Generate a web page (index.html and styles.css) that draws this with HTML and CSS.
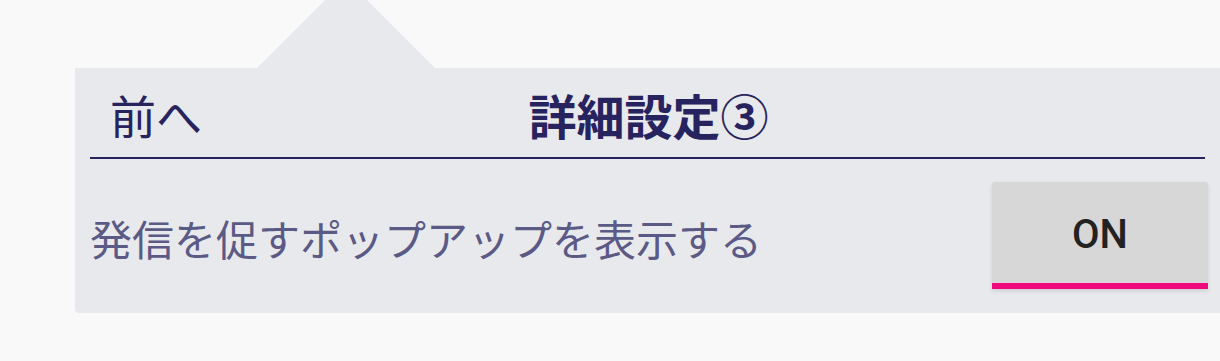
FILE: index.html
```html
<!DOCTYPE html>
<html lang="ja">
<head>
<meta charset="utf-8">
<link rel="stylesheet" href="styles.css">
</head>
<body>
<div class="panel">
  <div class="header">
    <span class="back">前へ</span>
    <span class="title">詳細設定③</span>
  </div>
  <div class="row">
    <span class="label">発信を促すポップアップを表示する</span>
    <button class="toggle">ON</button>
  </div>
</div>
</body>
</html>
```
FILE: styles.css
```css
html, body {
  margin: 0;
  padding: 0;
  background: #f9f9fa;
  font-family: "Noto Sans CJK JP", "Noto Sans", sans-serif;
}
body {
  padding-top: 68px;
  height: 361px;
  box-sizing: border-box;
  overflow: hidden;
}
.panel {
  position: relative;
  margin-left: 75px;
  background: #e8e9ec;
  border-radius: 0 0 0 4px;
  padding: 0 15px;
  height: 245px;
  box-sizing: border-box;
}
.panel::before {
  content: "";
  position: absolute;
  left: 182px;
  top: -89px;
  width: 0;
  height: 0;
  border-left: 89px solid transparent;
  border-right: 89px solid transparent;
  border-bottom: 89px solid #e8e9ec;
}
.header {
  position: relative;
  height: 89px;
  border-bottom: 2px solid #27235f;
  display: flex;
  align-items: center;
  justify-content: center;
  color: #27235f;
}
.back {
  position: absolute;
  left: 20px;
  top: 50%;
  transform: translateY(-50%);
  font-size: 46px;
  line-height: 1;
  margin-top: 1px;
}
.title {
  font-size: 48px;
  font-weight: 700;
  line-height: 1;
  margin-top: 2px;
  margin-left: 2px;
}
.row {
  display: flex;
  align-items: center;
  justify-content: space-between;
  padding-top: 23px;
  margin-right: -3px;
}
.label {
  font-size: 42px;
  color: #5b5985;
  line-height: 1;
  margin-left: 0;
  margin-top: 4px;
}
.toggle {
  width: 216px;
  height: 107px;
  background: #d7d7d7;
  border: none;
  border-bottom: 6px solid #f0087f;
  border-radius: 3px 3px 0 0;
  box-shadow: 0 2px 4px rgba(0,0,0,0.12);
  font-family: Roboto, "Noto Sans", sans-serif;
  font-weight: 500;
  font-size: 40px;
  color: #222222;
  padding: 0;
  padding-top: 4px;
}
```
